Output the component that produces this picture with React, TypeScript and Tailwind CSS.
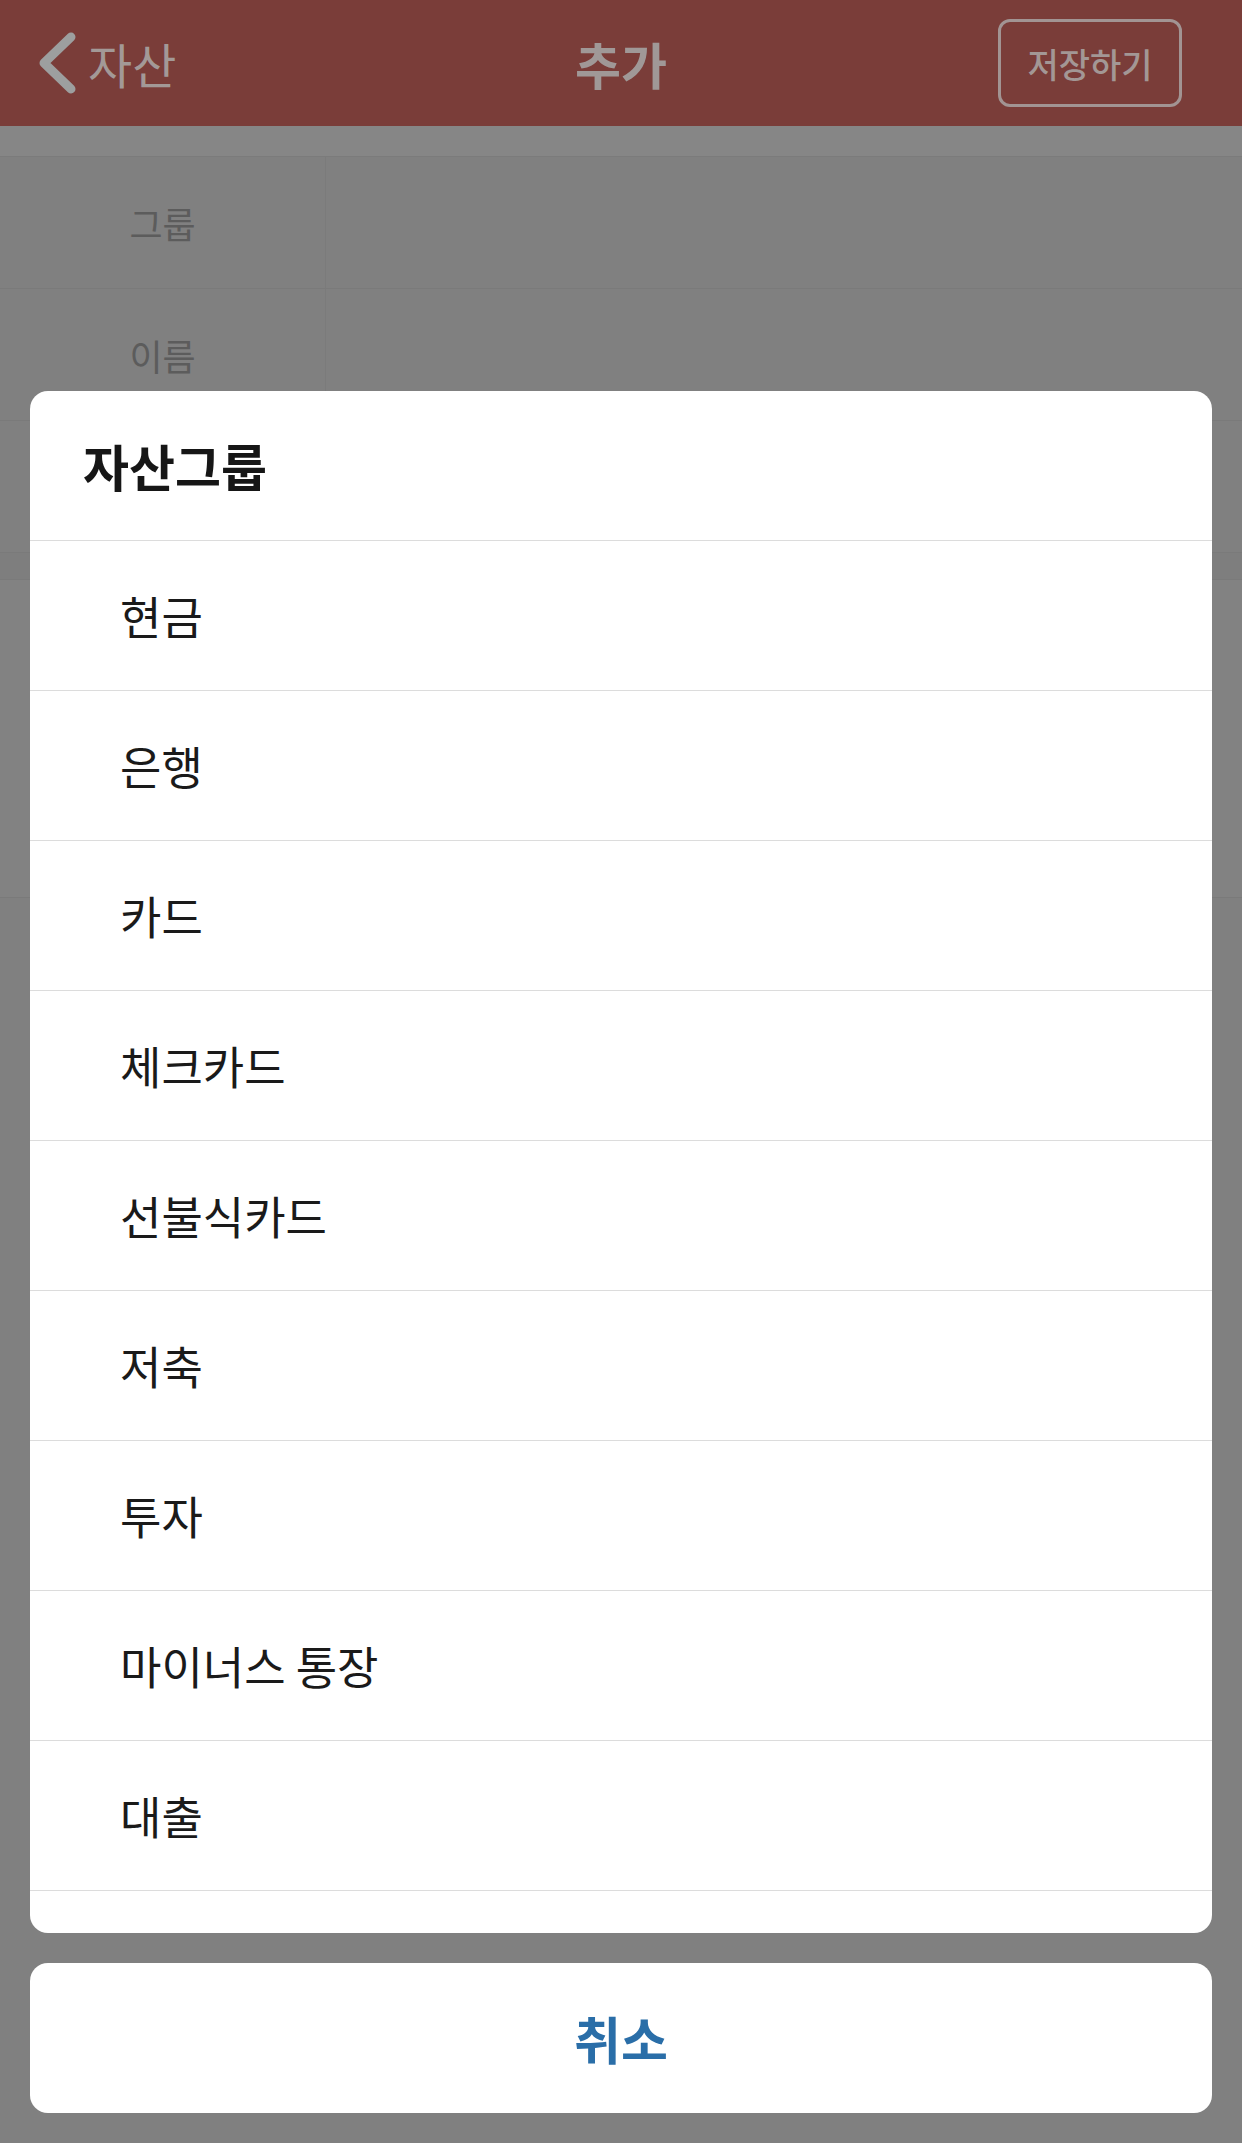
import { useState } from 'react';

const groups = ['현금', '은행', '카드', '체크카드', '선불식카드', '저축', '투자', '마이너스 통장', '대출'];

const font = { fontFamily: '"Noto Sans CJK KR", "Noto Sans", sans-serif' };

function FormRow({ label }: { label?: string }) {
  return (
    <div className="flex h-[132px] border-b border-[#7a7a7a]">
      <div className="flex w-[326px] shrink-0 items-center justify-center border-r border-[#7b7b7b] text-[36px] text-[#5c5c5c]">
        {label}
      </div>
      <div className="flex-1" />
    </div>
  );
}

export default function App() {
  const [selected, setSelected] = useState<string | null>(null);

  return (
    <div className="relative h-[2143px] w-[1242px] overflow-hidden bg-[#808080]" style={font}>
      {/* Dimmed page behind the sheet */}
      <div className="grid h-[126px] grid-cols-[1fr_auto_1fr] items-center bg-[#7a3d39] px-[38px]">
        <div className="flex items-center gap-[12px] text-[#a39997]">
          <svg width="38" height="62" viewBox="0 0 38 62" fill="none">
            <path d="M33 5 L6 31 L33 57" stroke="#9d9f9f" strokeWidth="9" strokeLinecap="round" strokeLinejoin="round" />
          </svg>
          <span className="text-[48px] leading-none">자산</span>
        </div>
        <div className="text-[50px] font-bold leading-none text-[#a09897]">추가</div>
        <div className="flex justify-end pr-[22px]">
          <button className="flex h-[88px] w-[184px] items-center justify-center rounded-[12px] border-[3px] border-[#a29493] text-[34px] font-medium text-[#a39795]">
            저장하기
          </button>
        </div>
      </div>
      <div className="h-[31px] border-b border-[#7b7b7b] bg-[#868686]" />
      <FormRow label="그룹" />
      <FormRow label="이름" />
      <FormRow />
      <div className="h-[27px] border-b border-[#7a7a7a] bg-[#7e7e7e]" />
      <div className="h-[318px] border-b border-[#7a7a7a] bg-[#828282]" />

      {/* Action sheet */}
      <div className="absolute inset-0 flex flex-col justify-end gap-[30px] px-[30px] pb-[30px]">
        <div className="flex h-[1542px] flex-col overflow-hidden rounded-[18px] bg-white">
          <div className="flex h-[150px] shrink-0 items-center border-b border-[#dcdcdc] pl-[53px] text-[50px] font-bold text-[#161616]">
            자산그룹
          </div>
          {groups.map((g) => (
            <button
              key={g}
              onClick={() => setSelected(g)}
              className="flex h-[150px] shrink-0 items-center border-b border-[#dcdcdc] pl-[90px] text-left text-[45px] text-[#1a1a1a]"
            >
              {g}
              {selected === g && <span className="sr-only">선택됨</span>}
            </button>
          ))}
        </div>
        <button className="flex h-[150px] shrink-0 items-center justify-center rounded-[18px] bg-white text-[51px] font-bold text-[#2a6ea8]">
          취소
        </button>
      </div>
    </div>
  );
}
